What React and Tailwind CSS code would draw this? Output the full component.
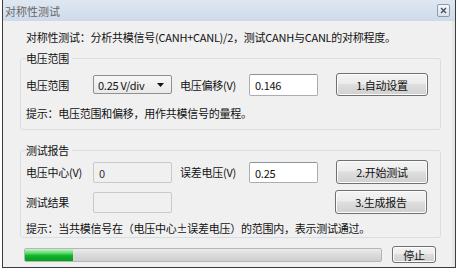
import React from "react";

const font = { fontFamily: '"Noto Sans CJK SC", "Liberation Sans", sans-serif' };

function Btn({ children, className = "" }) {
  return (
    <div
      className={
        "flex items-center justify-center rounded-[3px] border border-[#707070] bg-[linear-gradient(#f4f4f4_0%,#ececec_45%,#dedede_50%,#d0d0d0_100%)] text-[11px] text-[#111] shadow-[inset_0_0_0_1px_#fcfcfc] " +
        className
      }
    >
      {children}
    </div>
  );
}

function Input({ value, disabled, className = "" }) {
  return (
    <div
      className={
        "flex items-start rounded-[2px] border px-[5px] pt-[2px] text-[11px] leading-[16px] " +
        (disabled
          ? "border-[#c9c9c9] bg-[#f0f0f0] text-[#333]"
          : "border-[#abadb3] border-t-[#8f929a] bg-white text-[#111]") +
        " " +
        className
      }
    >
      {value}
    </div>
  );
}

export default function App() {
  return (
    <div className="h-[272px] w-[458px] bg-white" style={font}>
      <div className="ml-[2px] flex h-[268px] w-[454px] flex-col border-x border-b border-[#3c3c3c] bg-[#f0f0f0]">
        {/* title bar */}
        <div className="flex h-[21px] items-center justify-between bg-[linear-gradient(#dfe8f1,#cddaea)] pl-[2px] pr-[5px]">
          <span className="text-[11px] leading-[16px] text-[#666]">对称性测试</span>
          <div className="flex h-[13px] w-[13px] items-center justify-center rounded-[2px] border border-[#8c9aab] bg-[linear-gradient(#f4f7fa,#d9e2ec)]">
            <svg width="7" height="7" viewBox="0 0 7 7">
              <path d="M1 1L6 6M6 1L1 6" stroke="#44505e" strokeWidth="1.4" />
            </svg>
          </div>
        </div>
        {/* content */}
        <div className="flex flex-1 flex-col border-r-[3px] border-[#e6e6e6] pl-[17px] pr-[10px] pt-[8px] text-[11px] leading-[16px] tracking-[-0.25px] text-[#111]">
          <div className="pl-[6px]">
            对称性测试：分析共模信号(CANH+CANL)/2，测试CANH与CANL的对称程度。
          </div>

          <fieldset className="mt-[5px] w-[421px] rounded-[3px] border border-[#d8dfe4] pb-[8px] pl-[5px] pt-[7px]">
            <legend className="px-0 pr-[3px] leading-[16px]">电压范围</legend>
            <div className="flex h-[23px] items-center">
              <span className="w-[67px]">电压范围</span>
              <div className="flex h-[19px] w-[79px] items-center justify-between rounded-[2px] border border-[#8e8f8f] bg-[linear-gradient(#f7f7f7,#e9e9e9)] pl-[4px] pr-[7px]">
                <span>0.25 V/div</span>
                <svg width="7" height="4" viewBox="0 0 7 4">
                  <path d="M0 0H7L3.5 4Z" fill="#111" />
                </svg>
              </div>
              <span className="ml-[8px] w-[69px]">电压偏移(V)</span>
              <Input value="0.146" className="h-[22px] w-[69px]" />
              <Btn className="ml-[18px] h-[23px] w-[92px]">1.自动设置</Btn>
            </div>
            <div className="mt-[9px]">提示：电压范围和偏移，用作共模信号的量程。</div>
          </fieldset>

          <fieldset className="mt-[12px] w-[421px] rounded-[3px] border border-[#d8dfe4] pb-[1px] pl-[5px] pt-[2px]">
            <legend className="px-0 pr-[3px] leading-[16px]">测试报告</legend>
            <div className="flex h-[24px] items-center">
              <span className="w-[67px]">电压中心(V)</span>
              <Input value="0" disabled className="h-[21px] w-[79px]" />
              <span className="ml-[8px] w-[69px]">误差电压(V)</span>
              <Input value="0.25" className="h-[21px] w-[69px]" />
              <Btn className="ml-[18px] h-[24px] w-[92px]">2.开始测试</Btn>
            </div>
            <div className="mt-[6px] flex h-[24px] items-center">
              <span className="w-[67px]">测试结果</span>
              <Input value="" disabled className="h-[21px] w-[79px]" />
              <div className="flex-1" />
              <Btn className="mr-[13px] h-[24px] w-[92px]">3.生成报告</Btn>
            </div>
            <div className="mt-[6px]">提示：当共模信号在（电压中心±误差电压）的范围内，表示测试通过。</div>
          </fieldset>

          <div className="mt-[8px] flex items-center">
            <div className="ml-[4px] flex h-[14px] w-[358px] overflow-hidden rounded-[2px] border border-[#b5b5b5] bg-[linear-gradient(#ececec,#dadada_50%,#cfcfcf)]">
              <div className="h-full w-[48px] bg-[linear-gradient(#c8f5c8_0%,#5cd86a_35%,#0fb52a_55%,#069a1f_100%)]" />
            </div>
            <Btn className="ml-[10px] h-[17px] w-[44px]">停止</Btn>
          </div>
        </div>
      </div>
    </div>
  );
}
